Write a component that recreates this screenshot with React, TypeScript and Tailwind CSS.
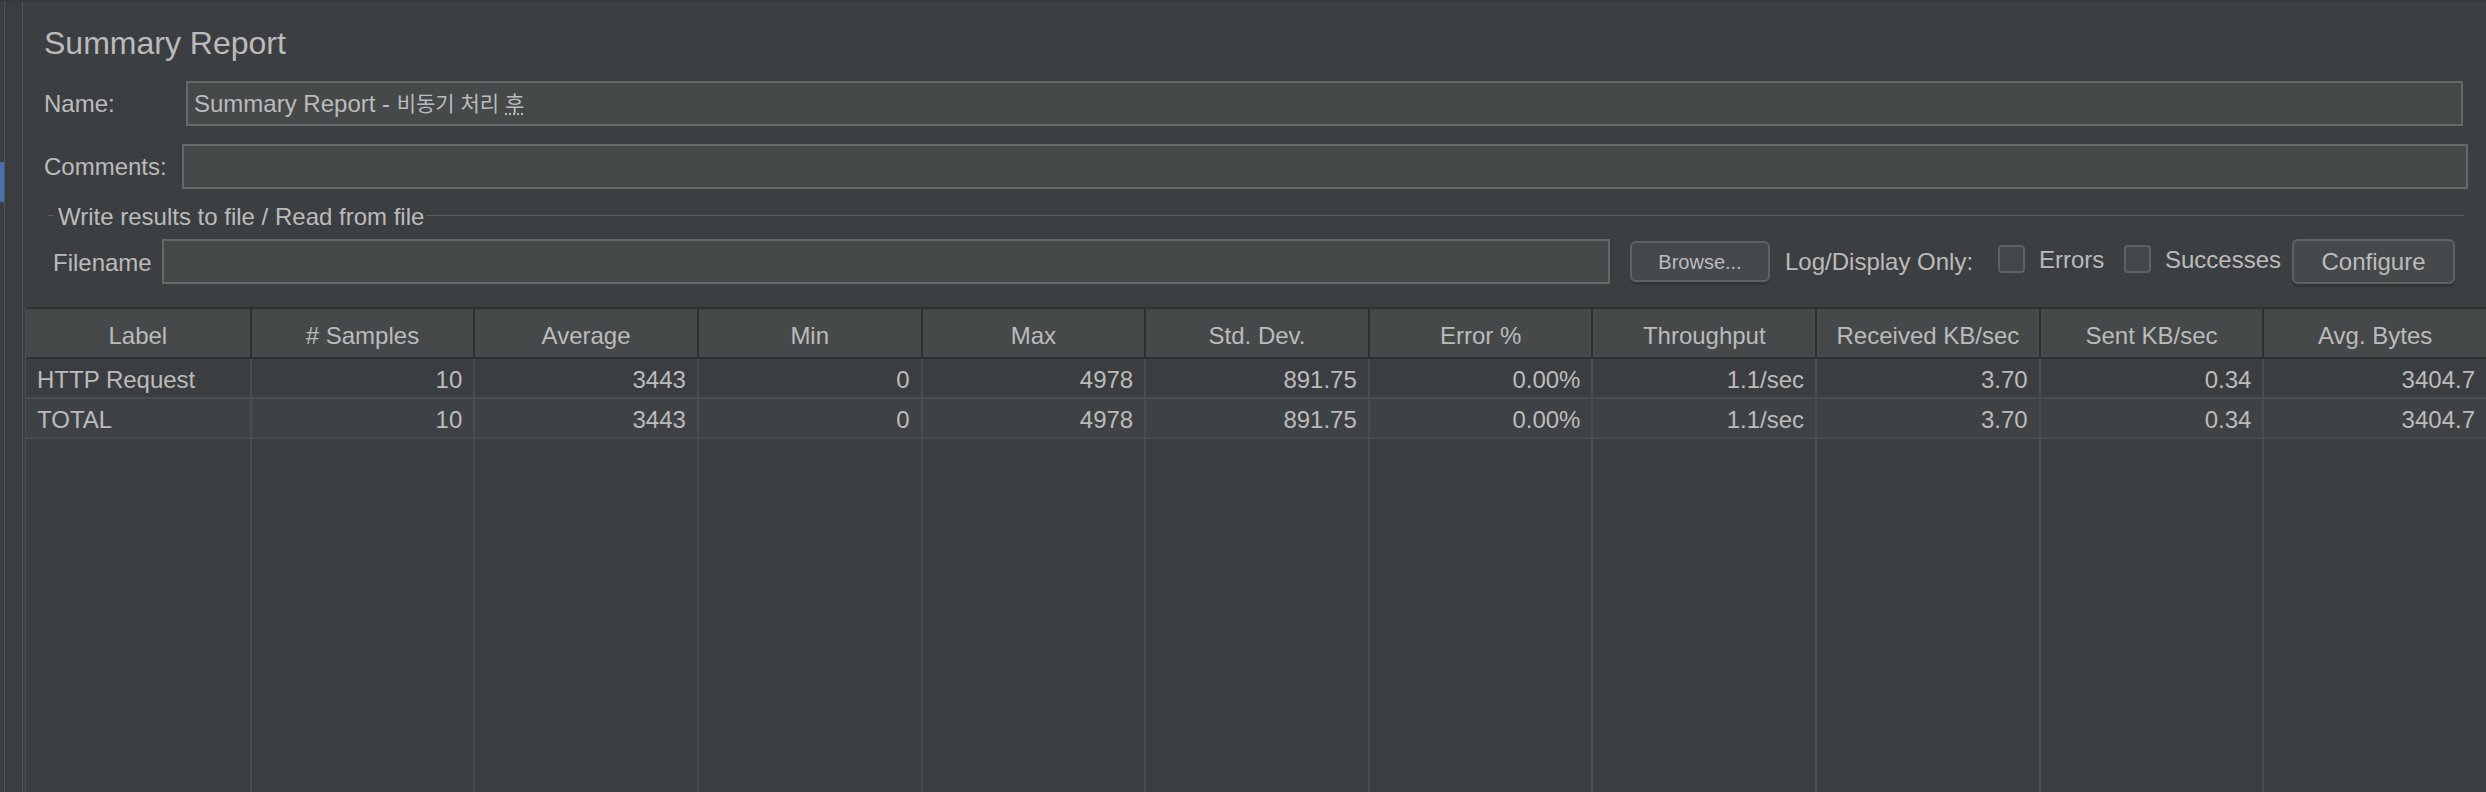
import React from "react";

const COLS = [
  "Label",
  "# Samples",
  "Average",
  "Min",
  "Max",
  "Std. Dev.",
  "Error %",
  "Throughput",
  "Received KB/sec",
  "Sent KB/sec",
  "Avg. Bytes",
];

const ROWS = [
  ["HTTP Request", "10", "3443", "0", "4978", "891.75", "0.00%", "1.1/sec", "3.70", "0.34", "3404.7"],
  ["TOTAL", "10", "3443", "0", "4978", "891.75", "0.00%", "1.1/sec", "3.70", "0.34", "3404.7"],
];

function Checkbox() {
  return <div className="w-[27px] h-[28px] shrink-0 rounded-[4px] border-2 border-[#5f6263] bg-[#43474a]" />;
}

export default function App() {
  return (
    <div className="w-[2486px] h-[792px] bg-[#3c3f41] flex flex-col overflow-hidden text-[#bbbbbb] font-['Liberation_Sans','Noto_Sans_CJK_KR',sans-serif]">
      <div className="h-[2px] bg-[#36393b] shrink-0" />
      <div className="flex-1 flex min-h-0">
        {/* left strip */}
        <div className="w-[23px] h-full flex shrink-0">
          <div className="w-[4px] h-full flex flex-col">
            <div className="h-[160px]" />
            <div className="h-[40px] bg-[#4b6eaf]" />
          </div>
          <div className="w-[1px] h-full bg-[#515457]" />
          <div className="w-[17px] h-full bg-[#3b3e40]" />
          <div className="w-[1px] h-full bg-[#515457]" />
        </div>

        {/* main */}
        <div className="flex-1 flex flex-col min-w-0">
          <div className="mt-[23px] pl-[21px] h-[36px] leading-[36px] text-[32px] whitespace-nowrap">
            Summary Report
          </div>

          <div className="mt-[20px] h-[45px] flex items-center pl-[21px] pr-[23px] text-[24px]">
            <div className="w-[142px] shrink-0">Name:</div>
            <div className="flex-1 h-full bg-[#45494a] border-2 border-[#666869] flex items-center pl-[6px] whitespace-pre">
              {"Summary Report - "}
              <span className="text-[21px]">
                {"비동기 처리 "}
                <span className="underline decoration-dotted underline-offset-[3px]">후</span>
              </span>
            </div>
          </div>

          <div className="mt-[18px] h-[45px] flex items-center pl-[21px] pr-[18px] text-[24px]">
            <div className="w-[138px] shrink-0">Comments:</div>
            <div className="flex-1 h-full bg-[#45494a] border-2 border-[#666869]" />
          </div>

          <div className="mt-[16px] h-[24px] flex items-start pl-[25px] pr-[22px] text-[24px] leading-[24px]">
            <div className="mt-[10px] w-[6px] h-[1px] bg-[#5c5f61] shrink-0" />
            <div className="ml-[4px] whitespace-nowrap">Write results to file / Read from file</div>
            <div className="mt-[10px] ml-[2px] flex-1 h-[1px] bg-[#5c5f61]" />
          </div>

          <div className="mt-[10px] h-[45px] flex items-center pl-[30px] pr-[31px] text-[24px] whitespace-nowrap">
            <div className="w-[109px] shrink-0 mt-[3px]">Filename</div>
            <div className="flex-1 h-full bg-[#45494a] border-2 border-[#666869]" />
            <button className="ml-[20px] w-[140px] h-[41px] shrink-0 rounded-[6px] border-2 border-[#5f6263] bg-[#46494b] shadow-[0_3px_0_#323436] text-[20px] text-[#bbbbbb] flex items-center justify-center">
              Browse...
            </button>
            <div className="ml-[15px] w-[190px] shrink-0">Log/Display Only:</div>
            <div className="ml-[23px] -mt-[5px]">
              <Checkbox />
            </div>
            <div className="ml-[14px] w-[62px] shrink-0 -mt-[3px]">Errors</div>
            <div className="ml-[23px] -mt-[5px]">
              <Checkbox />
            </div>
            <div className="ml-[14px] w-[112px] shrink-0 -mt-[3px]">Successes</div>
            <button className="ml-[15px] w-[163px] h-[45px] shrink-0 rounded-[6px] border-2 border-[#5f6263] bg-[#46494b] shadow-[0_3px_0_#323436] text-[24px] text-[#bbbbbb] flex items-center justify-center">
              Configure
            </button>
          </div>

          {/* table */}
          <div className="mt-[23px] ml-[2px] flex-1 flex flex-col min-h-0 border-l border-[#4b4e50] text-[24px]">
            <div className="h-[52px] shrink-0 grid grid-cols-11 bg-[#45494a] border-t-2 border-b-2 border-[#2e3032]">
              {COLS.map((c, i) => (
                <div
                  key={c}
                  className={
                    "flex items-center justify-center pt-[5px] whitespace-nowrap overflow-hidden " +
                    (i > 0 ? "border-l-2 border-[#2e3032]" : "")
                  }
                >
                  {c}
                </div>
              ))}
            </div>
            {ROWS.map((r, ri) => (
              <div
                key={ri}
                className={
                  "h-[40px] shrink-0 grid grid-cols-11 border-b-2 border-[#4b4e50] " +
                  (ri === 1 ? "bg-[#3f4244]" : "bg-[#3b3e40]")
                }
              >
                {r.map((v, i) => (
                  <div
                    key={i}
                    className={
                      "flex items-center pt-[4px] whitespace-nowrap overflow-hidden " +
                      (i === 0 ? "justify-start pl-[11px]" : "justify-end pr-[11px] border-l-2 border-[#4b4e50]")
                    }
                  >
                    {v}
                  </div>
                ))}
              </div>
            ))}
            <div className="flex-1 grid grid-cols-11 bg-[#3b3e40]">
              {COLS.map((c, i) => (
                <div key={c} className={i > 0 ? "border-l-2 border-[#4b4e50]" : ""} />
              ))}
            </div>
          </div>
        </div>
      </div>
    </div>
  );
}
